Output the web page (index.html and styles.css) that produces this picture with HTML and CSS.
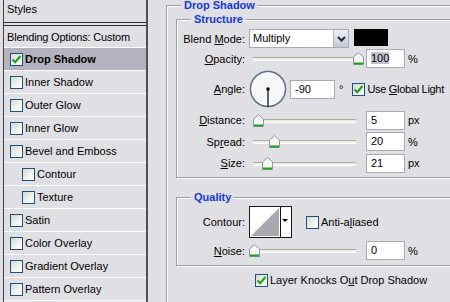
FILE: index.html
```html
<!DOCTYPE html>
<html lang="en">
<head>
    <meta charset="UTF-8">
    <meta name="viewport" content="width=device-width, initial-scale=1.0">
    <title>Layer Style - Drop Shadow</title>
    <link rel="stylesheet" href="styles.css">
</head>
<body>
<aside class="style-list">
    <div class="list-head">Styles</div>
    <div class="list-item blend">Blending Options: Custom</div>
    <div class="list-item selected">
        <span class="check"><svg width="11" height="11" viewBox="0 0 11 11"><path d="M1.5 5.5 L4.2 8.2 L9.5 2" fill="none" stroke="#21a121" stroke-width="2.2"/></svg></span>
        <b>Drop Shadow</b>
    </div>
    <div class="list-item"><span class="check"></span>Inner Shadow</div>
    <div class="list-item"><span class="check"></span>Outer Glow</div>
    <div class="list-item"><span class="check"></span>Inner Glow</div>
    <div class="list-item"><span class="check"></span>Bevel and Emboss</div>
    <div class="list-item sub"><span class="check"></span>Contour</div>
    <div class="list-item sub"><span class="check"></span>Texture</div>
    <div class="list-item"><span class="check"></span>Satin</div>
    <div class="list-item"><span class="check"></span>Color Overlay</div>
    <div class="list-item"><span class="check"></span>Gradient Overlay</div>
    <div class="list-item"><span class="check"></span>Pattern Overlay</div>
</aside>

<main class="panel">
    <section class="group outer">
        <span class="legend">Drop Shadow</span>

        <section class="group structure">
            <span class="legend">Structure</span>

            <div class="row r-blend">
                <span class="lbl">Blend <u>M</u>ode:</span>
                <div class="combo">
                    <span class="combo-val">Multiply</span>
                    <span class="combo-btn"><svg width="13" height="15" viewBox="0 0 13 15"><path d="M3 6 L6.5 9.5 L10 6" fill="none" stroke="#1e2a44" stroke-width="2"/></svg></span>
                </div>
                <span class="swatch"></span>
            </div>

            <div class="row r-opacity">
                <span class="lbl"><u>O</u>pacity:</span>
                <div class="slider">
                    <span class="track"></span>
                    <span class="thumb" style="left:104px"><svg width="11" height="13" viewBox="0 0 11 13"><path d="M0.5 5 L5.5 0.5 L10.5 5 V12.5 H0.5 Z" fill="#f6f6f2" stroke="#8c99a8"/><path d="M1 11.5 H10" stroke="#21a121" stroke-width="2"/></svg></span>
                </div>
                <span class="field"><span class="sel">100</span></span>
                <span class="unit">%</span>
            </div>

            <div class="row r-angle">
                <span class="lbl"><u>A</u>ngle:</span>
                <svg class="dial" width="38" height="38" viewBox="0 0 38 38">
                    <circle cx="19" cy="19" r="17.5" fill="#f7f7f9" stroke="#5d6d88" stroke-width="1.5"/>
                    <circle cx="19" cy="19" r="16" fill="none" stroke="#fff"/>
                    <line x1="19" y1="19" x2="19" y2="37" stroke="#000" stroke-width="1.2"/>
                    <rect x="17.5" y="17.5" width="3" height="3" fill="#000"/>
                </svg>
                <span class="field wide">-90</span>
                <span class="unit deg">°</span>
                <span class="check global"><svg width="11" height="11" viewBox="0 0 11 11"><path d="M1.5 5.5 L4.2 8.2 L9.5 2" fill="none" stroke="#21a121" stroke-width="2.2"/></svg></span>
                <span class="check-text tight">Use <u>G</u>lobal Light</span>
            </div>

            <div class="row r-distance">
                <span class="lbl"><u>D</u>istance:</span>
                <div class="slider">
                    <span class="track"></span>
                    <span class="thumb" style="left:4px"><svg width="11" height="13" viewBox="0 0 11 13"><path d="M0.5 5 L5.5 0.5 L10.5 5 V12.5 H0.5 Z" fill="#f6f6f2" stroke="#8c99a8"/><path d="M1 11.5 H10" stroke="#21a121" stroke-width="2"/></svg></span>
                </div>
                <span class="field">5</span>
                <span class="unit">px</span>
            </div>

            <div class="row r-spread">
                <span class="lbl">Sp<u>r</u>ead:</span>
                <div class="slider">
                    <span class="track"></span>
                    <span class="thumb" style="left:20px"><svg width="11" height="13" viewBox="0 0 11 13"><path d="M0.5 5 L5.5 0.5 L10.5 5 V12.5 H0.5 Z" fill="#f6f6f2" stroke="#8c99a8"/><path d="M1 11.5 H10" stroke="#21a121" stroke-width="2"/></svg></span>
                </div>
                <span class="field">20</span>
                <span class="unit">%</span>
            </div>

            <div class="row r-size">
                <span class="lbl"><u>S</u>ize:</span>
                <div class="slider">
                    <span class="track"></span>
                    <span class="thumb" style="left:13px"><svg width="11" height="13" viewBox="0 0 11 13"><path d="M0.5 5 L5.5 0.5 L10.5 5 V12.5 H0.5 Z" fill="#f6f6f2" stroke="#8c99a8"/><path d="M1 11.5 H10" stroke="#21a121" stroke-width="2"/></svg></span>
                </div>
                <span class="field">21</span>
                <span class="unit">px</span>
            </div>
        </section>

        <section class="group quality">
            <span class="legend">Quality</span>

            <div class="row r-contour">
                <span class="lbl">Contour:</span>
                <svg class="contour" width="43" height="32" viewBox="0 0 43 32">
                    <rect x="0.5" y="0.5" width="42" height="31" fill="#fff" stroke="#1a1a1a"/>
                    <path d="M2 30 L30 2 V30 Z" fill="#a8a8ae"/>
                    <line x1="31.5" y1="1" x2="31.5" y2="31" stroke="#1a1a1a"/>
                    <path d="M33 13 H39 L36 16 Z" fill="#000"/>
                </svg>
                <span class="check anti"></span>
                <span class="check-text">Anti-a<u>l</u>iased</span>
            </div>

            <div class="row r-noise">
                <span class="lbl"><u>N</u>oise:</span>
                <div class="slider">
                    <span class="track"></span>
                    <span class="thumb" style="left:0px"><svg width="11" height="13" viewBox="0 0 11 13"><path d="M0.5 5 L5.5 0.5 L10.5 5 V12.5 H0.5 Z" fill="#f6f6f2" stroke="#8c99a8"/><path d="M1 11.5 H10" stroke="#21a121" stroke-width="2"/></svg></span>
                </div>
                <span class="field">0</span>
                <span class="unit">%</span>
            </div>
        </section>

        <div class="knock">
            <span class="check"><svg width="11" height="11" viewBox="0 0 11 11"><path d="M1.5 5.5 L4.2 8.2 L9.5 2" fill="none" stroke="#21a121" stroke-width="2.2"/></svg></span>
            <span class="check-text">Layer Knocks O<u>u</u>t Drop Shadow</span>
        </div>
    </section>
</main>
</body>
</html>
```

FILE: styles.css
```css
* {
  box-sizing: border-box;
}

html, body {
  margin: 0;
  padding: 0;
}

body {
  width: 450px;
  height: 302px;
  overflow: hidden;
  display: flex;
  font-family: "Liberation Sans", Arial, sans-serif;
  font-size: 11px;
  color: #000;
  background: #e0dfe3;
}

u {
  text-decoration: underline;
  text-underline-offset: 1px;
}

/* left list of styles */
.style-list {
  width: 145px;
  margin-left: 3px;
  flex: none;
  border-left: 1px solid #404046;
  border-right: 2px solid #505058;
  background: #e0dfe3;
}

.list-head {
  height: 26px;
  padding: 0 0 4px 3px;
  display: flex;
  align-items: center;
  border-bottom: 4px double #303036;
}

.list-item {
  height: 23px;
  padding-left: 6px;
  display: flex;
  align-items: center;
  border-bottom: 1px solid #fff;
}

.list-item.blend {
  height: 22px;
  padding-left: 3px;
  letter-spacing: -0.2px;
}

.list-item.sub {
  padding-left: 18px;
}

.list-item.selected {
  background: #b4b3bd;
}

.check {
  width: 13px;
  height: 13px;
  flex: none;
  margin-right: 2px;
  display: inline-flex;
  align-items: center;
  justify-content: center;
  border: 1px solid #1c5180;
  background: linear-gradient(135deg, #d6d6d0 0%, #f4f4f0 60%, #fff 100%);
}

.check-text.tight {
  letter-spacing: -0.3px;
}

/* right side */
.panel {
  flex: 1;
  min-width: 0;
  padding: 5px 0 0 18px;
  overflow: hidden;
}

.group {
  position: relative;
  border: 1px solid #9d9da4;
  box-shadow: inset 1px 1px 0 #fff, 1px 1px 0 #fff;
}

.legend {
  position: absolute;
  top: -7px;
  left: 14px;
  padding: 0 3px;
  line-height: 13px;
  font-weight: bold;
  color: #1437dd;
  background: #e0dfe3;
}

.outer {
  margin-right: -40px;
  height: 320px;
  padding: 13px 20px 0 9px;
}

.structure {
  padding: 9px 0 3px;
}

.quality {
  margin-top: 19px;
  padding: 8px 0 5px;
}

.row {
  display: flex;
  align-items: center;
}

.lbl {
  width: 72px;
  flex: none;
  padding-right: 4px;
  text-align: right;
  white-space: nowrap;
}

.r-blend { height: 19px; }
.r-opacity { height: 21px; }
.r-angle { height: 40px; }
.r-distance { height: 22px; }
.r-spread { height: 21px; }
.r-size { height: 22px; }
.r-contour { height: 32px; }
.r-noise { height: 19px; margin-top: 3px; }

.combo {
  width: 100px;
  height: 19px;
  display: flex;
  border: 1px solid #a5acb5;
  background: #fff;
}

.combo-val {
  flex: 1;
  padding-left: 3px;
  line-height: 17px;
}

.combo-btn {
  width: 15px;
  display: flex;
  align-items: center;
  justify-content: center;
  border-left: 1px solid #b8b8c2;
  background: linear-gradient(#eeeef2, #c6c6d0);
}

.swatch {
  align-self: flex-start;
  width: 34px;
  height: 17px;
  margin-left: 5px;
  background: #000;
}

.slider {
  position: relative;
  width: 112px;
  height: 13px;
  flex: none;
}

.track {
  position: absolute;
  left: 4px;
  right: 5px;
  top: 5px;
  height: 4px;
  background: #f0efe6;
  border-top: 1px solid #aaa99e;
  border-bottom: 1px solid #fff;
}

.thumb {
  position: absolute;
  top: 0;
  width: 11px;
  height: 13px;
}

.thumb svg {
  display: block;
}

.field {
  width: 39px;
  height: 19px;
  flex: none;
  margin-left: 5px;
  padding-left: 4px;
  line-height: 17px;
  border: 1px solid #a5acb5;
  background: #fff;
}

.field.wide {
  width: 45px;
  margin-left: 3px;
}

.sel {
  background: #c2c2cc;
}

.unit {
  margin-left: 3px;
}

.unit.deg {
  margin-left: 4px;
}

.dial {
  flex: none;
  display: block;
}

.check.global {
  margin-left: 9px;
}

.contour {
  flex: none;
  display: block;
}

.check.anti {
  margin-left: 14px;
}

.knock {
  display: flex;
  align-items: center;
  height: 14px;
  margin-top: 7px;
  padding-left: 79px;
}
```
